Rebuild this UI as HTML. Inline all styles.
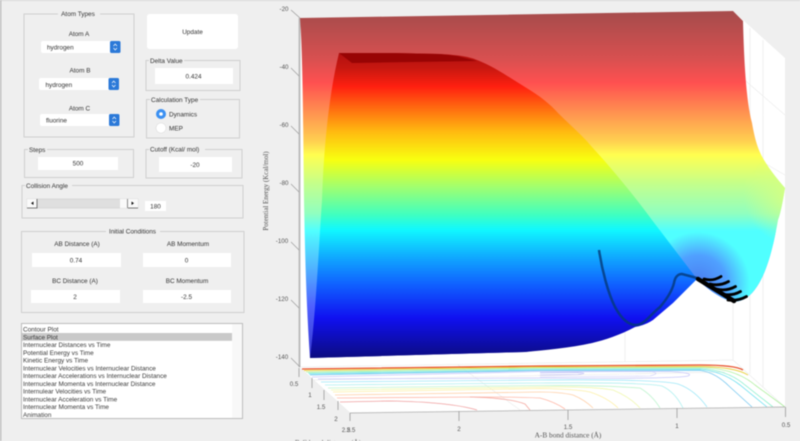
<!DOCTYPE html>
<html><head><meta charset="utf-8"><style>
html,body{margin:0;padding:0;background:#efefef;overflow:hidden;width:800px;height:441px}
svg{display:block;filter:blur(.42px)}
text{font-family:"Liberation Sans",sans-serif;font-size:6.4px;fill:#333}
.m{text-anchor:middle}
.s{font-family:"Liberation Serif",serif;fill:#555;font-size:7.3px}
.t{font-size:6.2px;fill:#555}
.b{fill:none;stroke:#cfcfcf;stroke-width:1}
.w{fill:#fff}
.l{fill:#3a3a3a;font-size:6.4px}
.c{fill:none;stroke:#fff;stroke-width:.7}
</style></head><body>
<svg width="800" height="441" viewBox="0 0 800 441" xmlns="http://www.w3.org/2000/svg">
<defs>
<linearGradient id="back" gradientUnits="userSpaceOnUse" x1="0" y1="14" x2="0" y2="358">
<stop offset="0" stop-color="#a84c4c"/><stop offset=".13" stop-color="#d85050"/>
<stop offset=".2" stop-color="#ff5050"/><stop offset=".3" stop-color="#ff9c50"/><stop offset=".37" stop-color="#ffd050"/>
<stop offset=".41" stop-color="#ffff50"/><stop offset=".5" stop-color="#c0ff90"/><stop offset=".58" stop-color="#90ffc0"/>
<stop offset=".63" stop-color="#50ffff"/><stop offset=".72" stop-color="#50c0ff"/><stop offset=".85" stop-color="#5060ff"/><stop offset="1" stop-color="#3838d0"/>
</linearGradient>
<linearGradient id="front" gradientUnits="userSpaceOnUse" x1="0" y1="53" x2="0" y2="358">
<stop offset="0" stop-color="#b01010"/><stop offset=".05" stop-color="#c81810"/><stop offset=".11" stop-color="#ff2010"/>
<stop offset=".17" stop-color="#ff6010"/><stop offset=".26" stop-color="#ffbc10"/><stop offset=".35" stop-color="#f8ff10"/>
<stop offset=".44" stop-color="#a0ff70"/><stop offset=".53" stop-color="#40ffc0"/><stop offset=".58" stop-color="#10f8ff"/>
<stop offset=".68" stop-color="#10a0ff"/><stop offset=".76" stop-color="#1060ff"/><stop offset=".87" stop-color="#1010f0"/><stop offset="1" stop-color="#0c0c80"/>
</linearGradient>
<radialGradient id="bowl" gradientUnits="userSpaceOnUse" cx="698" cy="284" r="52">
<stop offset="0" stop-color="#4a7cf0"/><stop offset=".55" stop-color="#50a0ff"/><stop offset="1" stop-color="#50ffff"/>
</radialGradient>
<radialGradient id="edge" gradientUnits="userSpaceOnUse" cx="792" cy="196" r="48">
<stop offset="0" stop-color="#d8ff80" stop-opacity=".95"/><stop offset="1" stop-color="#d8ff80" stop-opacity="0"/>
</radialGradient>
<clipPath id="surf"><path d="M300 18 L733 11 L743 21 C744 60 746 100 752 123 C755 140 758 150 764 160 C770 170 778 180 785 188 C783 200 781 212 778 220 C772 255 764 280 752 293 C745 300 738 303 730 301 C718 297 706 288 695 277 L635 327 L592 343 L525 352 L310 358 C306 300 305 250 304 200 C303 120 303 60 300 18Z"/></clipPath>
</defs>

<rect width="800" height="441" fill="#efefef"/>
<rect width="800" height="1" fill="#d8d8d8"/>
<rect x="0" y="0" width="1.4" height="441" fill="#bdbdbd"/>

<!-- axes box -->
<polygon points="299,18 733,11 785,58 785,407 350,413 299,367" fill="#fff"/>
<g stroke="#ececec" stroke-width=".7" fill="none">
<path d="M299 367 L733 360 L785 407M733 11V360M750 28V374M763 40V387M733 70L785 115M733 145L785 175M350 413L299 367M458 365L520 410M625 362V325M313 380L725 372"/>
</g>
<rect x="298.500" y="18" width="2" height="349" fill="#bcbcbc"/>

<!-- z ticks and labels -->
<g stroke="#9a9a9a" stroke-width=".7" fill="none">
<path d="M291 10L300 18M291 68L299 76M291 126L299 134M291 184L299 192M291 242L299 250M291 300L299 308M291 358L300 367"/>
</g>
<text class="t m" x="284" y="11">-20</text><text class="t m" x="284" y="69">-40</text><text class="t m" x="284" y="127">-60</text>
<text class="t m" x="284" y="185">-80</text><text class="t m" x="282" y="243">-100</text><text class="t m" x="282" y="301">-120</text><text class="t m" x="282" y="359">-140</text>
<text class="s m" style="font-size:7px" transform="translate(268,191) rotate(-90)">Potential Energy (Kcal/mol)</text>

<!-- surface back sheet -->
<g clip-path="url(#surf)">
<rect x="299" y="10" width="490" height="350" fill="url(#back)"/>
<path d="M660 231 L790 231 V310 H695Z" fill="url(#bowl)"/>
<rect x="740" y="150" width="50" height="100" fill="url(#edge)"/>
</g>
<!-- surface front sheet -->
<path d="M339 53 L393 53 L440 54 C460 55 470 57 477 60 C495 67 510 78 525 87 C540 96 550 104 558 113 C570 125 582 135 592 147 C615 172 635 197 652 220 L697 279 L673 303 L653 320 C645 325 640 326 635 327 C620 335 605 340 592 343 C570 348 545 350 525 352 L310 358 C316 310 318 260 322 200 C324 140 330 90 339 53Z" fill="url(#front)"/>
<polygon points="339,53 393,53 440,54 457,56 477,61 352,63" fill="#980404"/>

<!-- trajectory -->
<path d="M599 250 C602 270 608 293 615 307 C621 318 628 325 636 325 C644 325 650 315 660 307 C666 300 672 291 674 283 C675 277 678 274 682 274 L697 278" fill="none" stroke="#053a78" stroke-width="2.500" opacity=".8"/>
<g fill="none" stroke="#000" stroke-linecap="round">
<path d="M698 279 L734 301" stroke-width="4.500"/>
<path d="M704 279 C711 281 717 279 721 276.500" stroke-width="2.800"/>
<path d="M710 284 C718 286 724 284 728.500 281.500" stroke-width="2.800"/>
<path d="M716 289 C724 291 731 289 735.500 286.500" stroke-width="2.800"/>
<path d="M722 294 C730 296 736 294 740.500 291.500" stroke-width="2.800"/>
<path d="M728 300 C736 301 742 299 746.500 296.500" stroke-width="2.800"/>
</g>

<!-- contours -->
<g fill="none" stroke-width=".8">
<path d="M302 369 L540 366 L700 365 Q735 365 743 370" stroke="#e8502a" stroke-width="1.300"/>
<path d="M304 370.500 L540 367 L700 366.500 Q735 367 748 375" stroke="#e8d040" stroke-width="1"/>
<path d="M306 372 L540 368 L700 367.500 Q735 368 755 385 L785 407" stroke="#b0f0a0"/>
<path d="M308 373 L540 369 L700 368.500 Q728 370 745 385 L773 407" stroke="#90f0d0"/>
<path d="M309 374 L540 370 L700 369.500 Q722 371 740 385 L767 407" stroke="#70e0f0"/>
<path d="M310 375 L540 370.500 L700 370.500 Q715 372 730 387 L752 407" stroke="#78c8f0"/>
<path d="M312 377 L540 371.500 L670 371.500 Q695 373 688 376 Q675 379 540 378 L318 379" stroke="#c8c8fa"/>
<path d="M540 372 L650 371.500 Q662 373 650 376 L540 377" stroke="#c8c8f8" stroke-width=".6"/>
<path d="M540 373 L578 372.500 Q590 373 578 374.500 L540 375" stroke="#a8a8f0" stroke-width=".6"/>
<path d="M321 382 L540 380 Q660 379 678 384 Q695 390 707 407" stroke="#a0e8f8"/>
<path d="M325 385 L540 383 Q640 382 662 386 Q675 392 683 408" stroke="#b0f0f0"/>
<path d="M328 388 L540 385.500 Q600 385 640 388 Q652 395 660 408" stroke="#c0f4d0"/>
<path d="M331 390 L540 387 Q590 386 613 390 Q630 397 640 408" stroke="#f0f8b0"/>
<path d="M333 392 L540 388.500 Q575 389 590 392 Q608 398 618 408" stroke="#fdf0a8"/>
<path d="M335 395 L540 392 Q560 392 573 395 Q585 400 593 408" stroke="#ffd0a8"/>
<path d="M337 398 L480 397 Q515 397 540 398 Q555 402 565 409" stroke="#ffb8a8"/>
<path d="M340 402 L390 401 Q450 402 477 410" stroke="#f0a0a0"/>
<path d="M470 397 Q510 398 525 404 L530 410" stroke="#f4a8a0"/>
</g>
<path d="M350 413 L785 407" stroke="#b8b8b8" stroke-width=".9" fill="none"/>
<g stroke="#9a9a9a" stroke-width=".8" fill="none">
<path d="M350 413V421M459 411V421M568 410V420M677 408V418M785.500 407V417M299 368V377M312 378V388M324 390V400M338 401V410"/>
</g>
<text class="t m" x="294" y="386">0.5</text><text class="t m" x="310" y="397">1</text><text class="t m" x="321" y="409">1.5</text>
<text class="t m" x="336" y="421">2</text><text class="t m" x="346" y="432">2.5</text><text class="t m" x="351" y="432">2.5</text>
<text class="t m" x="459" y="431">2</text><text class="t m" x="568" y="429">1.5</text><text class="t m" x="677" y="428">1</text><text class="t m" x="786" y="427">0.5</text>
<text class="s m" x="568" y="437.500">A-B bond distance (Å)</text>
<text class="s m" x="328" y="445">B-C bond distance (Å)</text>

<!-- Atom Types -->
<rect class="b" x="24" y="14" width="110" height="123"/>
<rect x="58" y="10" width="42" height="8" fill="#efefef"/>
<text class="m" x="78" y="16">Atom Types</text>
<text class="m" x="79" y="36">Atom A</text>
<text class="m" x="80" y="72.500">Atom B</text>
<text class="m" x="79.500" y="110.500">Atom C</text>
<rect class="w" x="41" y="41" width="79" height="12" rx="2"/><rect x="110" y="41" width="10.500" height="12" rx="1.500" fill="#2b79d8"/>
<text x="47" y="49.500">hydrogen</text><path class="c" d="M113.500 46L115.200 44L117 46M113.500 48L115.200 50L117 48"/>
<rect class="w" x="39" y="78" width="80" height="12" rx="2"/><rect x="108.500" y="78" width="10.500" height="12" rx="1.500" fill="#2b79d8"/>
<text x="45.500" y="87">hydrogen</text><path class="c" d="M112 83L113.700 81L115.500 83M112 85L113.700 87L115.500 85"/>
<rect class="w" x="40" y="114" width="80" height="12" rx="2"/><rect x="109" y="114" width="10.500" height="12" rx="1.500" fill="#2b79d8"/>
<text x="46" y="122.500">fluorine</text><path class="c" d="M112.500 119L114.200 117L116 119M112.500 121L114.200 123L116 121"/>

<!-- Update -->
<rect class="w" x="147" y="14" width="91" height="35" rx="2.500"/>
<text class="m" x="192.500" y="34">Update</text>

<!-- Delta -->
<rect class="b" x="146" y="60.500" width="94" height="30"/>
<rect x="149" y="56" width="35" height="8" fill="#efefef"/>
<text x="150" y="63">Delta Value</text>
<rect class="w" x="155" y="68" width="78" height="16"/>
<text class="m" x="193.500" y="78.500">0.424</text>

<!-- Calculation type -->
<rect class="b" x="146.500" y="99.500" width="93" height="38.500"/>
<rect x="150" y="95" width="50" height="8" fill="#efefef"/>
<text x="151" y="102">Calculation Type</text>
<circle cx="161" cy="114" r="5" fill="#3b90f2"/><circle cx="161" cy="114" r="1.800" fill="#fff"/>
<circle cx="161" cy="128" r="5" fill="#fff" stroke="#ddd" stroke-width=".6"/>
<text x="169" y="116.500">Dynamics</text><text x="169" y="130.500">MEP</text>

<!-- Steps -->
<rect class="b" x="24.500" y="149.500" width="109" height="28"/>
<rect x="28" y="145" width="19" height="8" fill="#efefef"/>
<text x="29" y="152">Steps</text>
<rect class="w" x="38" y="157" width="80" height="13"/>
<text class="m" x="78" y="165.500">500</text>

<!-- Cutoff -->
<rect class="b" x="146" y="149.500" width="96" height="28.500"/>
<rect x="149" y="145" width="56" height="8" fill="#efefef"/>
<text x="150" y="151.500">Cutoff (Kcal/ mol)</text>
<rect class="w" x="159" y="157" width="73" height="15"/>
<text class="m" x="195" y="167">-20</text>

<!-- Collision -->
<rect class="b" x="22" y="185.500" width="221" height="32.500"/>
<rect x="25" y="181" width="47" height="8" fill="#efefef"/>
<text x="26" y="188">Collision Angle</text>
<rect x="27" y="199" width="111" height="9" fill="#dfdfdf" stroke="#c8c8c8" stroke-width=".5"/>
<rect x="27" y="199" width="10" height="9" fill="#fafafa"/><rect x="128" y="199" width="10" height="9" fill="#fafafa"/>
<rect x="120" y="199" width="7" height="9" fill="#fafafa"/>
<path d="M27 208H37V199M128 208H138" stroke="#555" stroke-width=".8" fill="none"/><path d="M127.500 199V208" stroke="#555" stroke-width=".6"/>
<path d="M33.500 201.500V205L31 203.200Z" fill="#111"/><path d="M131.500 201.500V205L134 203.200Z" fill="#111"/>
<rect class="w" x="145" y="201" width="21" height="10"/>
<text class="m" x="155.500" y="208.500">180</text>

<!-- Initial Conditions -->
<rect class="b" x="21.500" y="231.500" width="222.500" height="81"/>
<rect x="106" y="227" width="54" height="8" fill="#efefef"/>
<text class="m" x="132.500" y="233.500">Initial Conditions</text>
<text class="m" x="77" y="246">AB Distance (A)</text><text class="m" x="188" y="246">AB Momentum</text>
<rect class="w" x="32" y="253" width="89" height="14"/><rect class="w" x="143" y="253" width="88" height="14"/>
<text class="m" x="76" y="262.500">0.74</text><text class="m" x="186.500" y="262.500">0</text>
<text class="m" x="75" y="283">BC Distance (A)</text><text class="m" x="187" y="283">BC Momentum</text>
<rect class="w" x="31" y="290" width="89" height="13"/><rect class="w" x="143" y="290" width="88" height="13"/>
<text class="m" x="75" y="299">2</text><text class="m" x="186.500" y="299">-2.5</text>

<!-- Listbox -->
<rect x="21.500" y="323.500" width="221" height="95" fill="#fff" stroke="#bdbdbd"/>
<rect x="232" y="324" width="10" height="94" fill="#f8f8f8"/>
<rect x="22" y="333" width="210" height="7.800" fill="#c9c9c9"/>
<text class="l" x="23" y="331.500">Contour Plot</text>
<text class="l" x="23" y="339.300">Surface Plot</text>
<text class="l" x="23" y="347">Internuclear Distances vs Time</text>
<text class="l" x="23" y="354.800">Potential Energy vs Time</text>
<text class="l" x="23" y="362.500">Kinetic Energy vs Time</text>
<text class="l" x="23" y="370.300">Internuclear Velocities vs Internuclear Distance</text>
<text class="l" x="23" y="378">Internuclear Accelerations vs Internuclear Distance</text>
<text class="l" x="23" y="385.800">Internuclear Momenta vs Internuclear Distance</text>
<text class="l" x="23" y="393.500">Internulear Velocities vs Time</text>
<text class="l" x="23" y="401.300">Internuclear Acceleration vs Time</text>
<text class="l" x="23" y="409">Internuclear Momenta vs Time</text>
<text class="l" x="23" y="416.800">Animation</text>
</svg>
</body></html>
